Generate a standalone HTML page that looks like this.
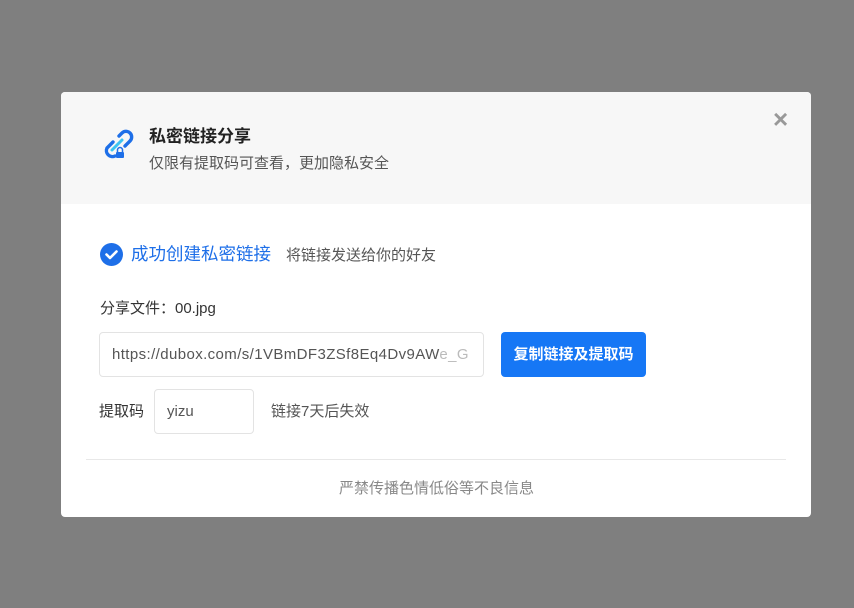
<!DOCTYPE html>
<html><head><meta charset="utf-8"><style>
body{margin:0;width:854px;height:608px;background:#7f7f7f;font-family:"Liberation Sans","Noto Sans CJK SC",sans-serif;position:relative;overflow:hidden}
.d{position:absolute;left:61px;top:92px;width:750px;height:425px;background:#fff;border-radius:4px;overflow:hidden}
.h{position:absolute;left:0;top:0;width:750px;height:112px;background:#f7f7f7}
.t{position:absolute;font-size:15px;color:#333;white-space:nowrap;line-height:20px}
</style></head><body>
<div class="d">
<div class="h"></div>
<svg style="position:absolute;left:40px;top:37px" width="34" height="36" viewBox="0 0 34 36">
<path d="M12 13 L6 19 A6 6 0 0 0 14 27" fill="none" stroke="#1e6fe8" stroke-width="3.4" stroke-linecap="round"/>
<path d="M18 7 L21 4 A5.5 5.5 0 0 1 29 12 L24 17" fill="none" stroke="#1e6fe8" stroke-width="3.4" stroke-linecap="round"/>
<path d="M11 21 L21 11" stroke="#3cc4f2" stroke-width="3" stroke-linecap="round"/>
<rect x="15" y="23" width="8" height="6" rx="1" fill="#1e6fe8"/>
<path d="M16.5 23 v-2 a2.5 2.5 0 0 1 5 0 v2" fill="none" stroke="#1e6fe8" stroke-width="1.5"/>
</svg>
<div class="t" style="left:88px;top:35px;font-size:17px;font-weight:bold;color:#222">私密链接分享</div>
<div class="t" style="left:88px;top:62px;color:#555">仅限有提取码可查看，更加隐私安全</div>
<div class="t" style="left:712px;top:17px;font-size:26px;color:#999;font-weight:bold">×</div>
<svg style="position:absolute;left:39px;top:151px" width="23" height="23"><circle cx="11.5" cy="11.5" r="11.5" fill="#1e6fe8"/><path d="M6.5 11.5 L10 15 L16.5 8.5" fill="none" stroke="#fff" stroke-width="2.6" stroke-linecap="round" stroke-linejoin="round"/></svg>
<div class="t" style="left:70px;top:151px;font-size:17.5px;color:#1e6fe8;line-height:22px">成功创建私密链接</div>
<div class="t" style="left:225px;top:154px;color:#555">将链接发送给你的好友</div>
<div class="t" style="left:39px;top:207px">分享文件：00.jpg</div>
<div style="position:absolute;left:38px;top:240px;width:383px;height:43px;border:1px solid #e3e3e3;border-radius:4px"></div>
<div class="t" style="left:51px;top:253px;color:#555;letter-spacing:0.4px">https://dubox.com/s/1VBmDF3ZSf8Eq4Dv9AW<span style="color:#bbb">e_G</span></div>
<div style="position:absolute;left:440px;top:240px;width:145px;height:45px;background:#1677f5;border-radius:4px;color:#fff;font-size:15px;font-weight:bold;text-align:center;line-height:45px">复制链接及提取码</div>
<div class="t" style="left:38px;top:310px">提取码</div>
<div style="position:absolute;left:93px;top:297px;width:98px;height:43px;border:1px solid #e3e3e3;border-radius:4px"></div>
<div class="t" style="left:106px;top:310px;color:#555">yizu</div>
<div class="t" style="left:210px;top:310px;color:#555">链接7天后失效</div>
<div style="position:absolute;left:25px;top:367px;width:700px;height:1px;background:#e8e8e8"></div>
<div class="t" style="left:278px;top:387px;color:#888">严禁传播色情低俗等不良信息</div>
</div>
</body></html>
